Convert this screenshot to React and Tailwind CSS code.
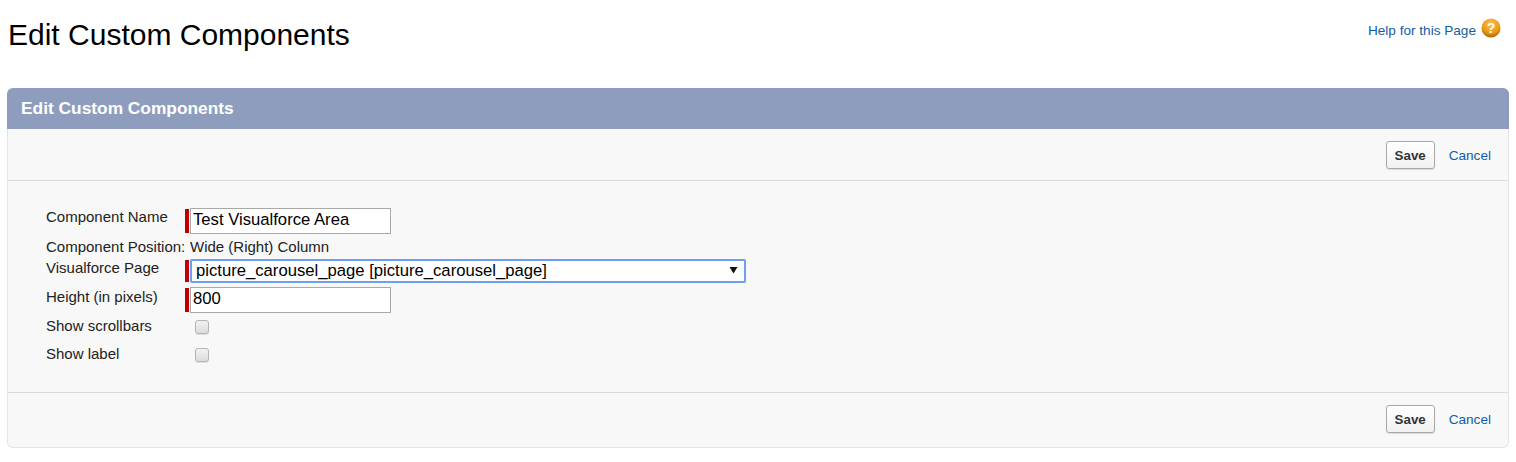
const FONT = "font-['Liberation_Sans',Arial,sans-serif]";

function SaveBar({ className }) {
  return (
    <div className={"flex items-start justify-end pt-[12px] " + className}>
      <button
        type="button"
        className="w-[49px] h-[28px] pt-px rounded-[3px] border border-[#a8a8a8] bg-gradient-to-b from-white to-[#f1f1f1] text-[13.33px] font-bold text-[#333] shadow-[0_1px_1px_rgba(0,0,0,0.12)]"
      >
        Save
      </button>
      <a href="#" className="ml-[14px] mr-[17px] mt-[7px] text-[13.6px] leading-[16px] text-[#0f5ea8]">
        Cancel
      </a>
    </div>
  );
}

function Row({ label, className, labelClass, children }) {
  return (
    <div className={"flex " + className}>
      <div className={"w-[139px] shrink-0 whitespace-nowrap text-[15px] leading-[16px] text-[#222] " + labelClass}>
        {label}
      </div>
      {children}
    </div>
  );
}

function RedBar({ className }) {
  return <div className={"w-[4px] ml-0 mr-px bg-[#c00000] " + className} />;
}

function Check() {
  return (
    <div className="ml-[10px] mt-[1px] w-[14px] h-[14px] rounded-[3px] border border-[#b5b5b5] bg-gradient-to-b from-[#f2f2f2] to-[#dcdcdc] shadow-[0_1px_1px_rgba(0,0,0,0.1)]" />
  );
}

export default function App() {
  return (
    <div className={"min-h-[462px] bg-white " + FONT}>
      <div className="flex justify-between h-[88px]">
        <h1 className="ml-[8px] mt-[18px] text-[30px] leading-[34px] text-black">
          Edit Custom Components
        </h1>
        <div className="flex items-start mt-[18px] mr-[15px]">
          <a href="#" className="mt-[4px] mr-[1px] text-[13.6px] leading-[17px] text-[#0f5ea8]">
            Help for this Page
          </a>
          <svg className="ml-[4px]" width="20" height="20" viewBox="0 0 20 20">
            <defs>
              <radialGradient id="helpFill" cx="50%" cy="30%" r="70%">
                <stop offset="0%" stopColor="#fbbf52" />
                <stop offset="65%" stopColor="#ee9a12" />
                <stop offset="100%" stopColor="#a8640a" />
              </radialGradient>
            </defs>
            <circle cx="10" cy="10" r="9.5" fill="url(#helpFill)" />
            <text x="10" y="15" textAnchor="middle" fontSize="14" fontWeight="bold" fill="#fff" fontFamily="Liberation Sans">
              ?
            </text>
          </svg>
        </div>
      </div>

      <div className="ml-[7px] w-[1502px] h-[360px] rounded-[6px] border-b border-x border-[#e4e4e4] bg-[#f8f8f8]">
        <div className="-mx-px h-[41px] rounded-t-[6px] bg-[#8e9dbe] pl-[14px] pt-[11px] text-[17.33px] leading-[18px] font-bold text-white">
          Edit Custom Components
        </div>

        <SaveBar className="h-[52px] border-b border-[#dcdcdc]" />

        <div className="h-[212px] pl-[38px] pt-[27px] border-b border-[#dcdcdc]">
          <Row label="Component Name" labelClass="pt-[1px]" className="h-[26px]">
            <RedBar className="h-[24px] mt-[1px]" />
            <input
              readOnly
              value="Test Visualforce Area"
              className="w-[201px] h-[26px] border border-[#a9a9a9] bg-white px-[2px] pb-[2px] text-[16.67px] text-black outline-none"
            />
          </Row>
          <Row label="Component Position:" labelClass="pt-[5px]" className="h-[25px]">
            <div className="pl-[5px] pt-[5px] text-[15px] leading-[16px] text-[#222]">
              Wide (Right) Column
            </div>
          </Row>
          <Row label="Visualforce Page" labelClass="pt-px" className="h-[24px]">
            <RedBar className="h-[22px] mt-[1px]" />
            <div className="flex items-center justify-between w-[556px] h-[24px] border-2 border-[#6f9ff0] rounded-[2px] bg-white pl-[4px] pr-[6px] pb-[2px] text-[16.67px] text-black">
              <span>picture_carousel_page [picture_carousel_page]</span>
              <svg width="9" height="8" viewBox="0 0 9 8">
                <path d="M0.5 1h8L4.5 7.5z" fill="#111" />
              </svg>
            </div>
          </Row>
          <Row label="Height (in pixels)" labelClass="pt-[2px]" className="h-[27px] mt-[4px]">
            <RedBar className="h-[24px] mt-[1px]" />
            <input
              readOnly
              value="800"
              className="w-[201px] h-[26px] border border-[#a9a9a9] bg-white px-[2px] pb-[2px] text-[16.67px] text-black outline-none"
            />
          </Row>
          <Row label="Show scrollbars" labelClass="pt-[4px]" className="h-[28px] items-start">
            <div className="pt-[5px]"><Check /></div>
          </Row>
          <Row label="Show label" labelClass="pt-[4px]" className="h-[28px] items-start">
            <div className="pt-[5px]"><Check /></div>
          </Row>
        </div>

        <SaveBar className="h-[52px]" />
      </div>
    </div>
  );
}
